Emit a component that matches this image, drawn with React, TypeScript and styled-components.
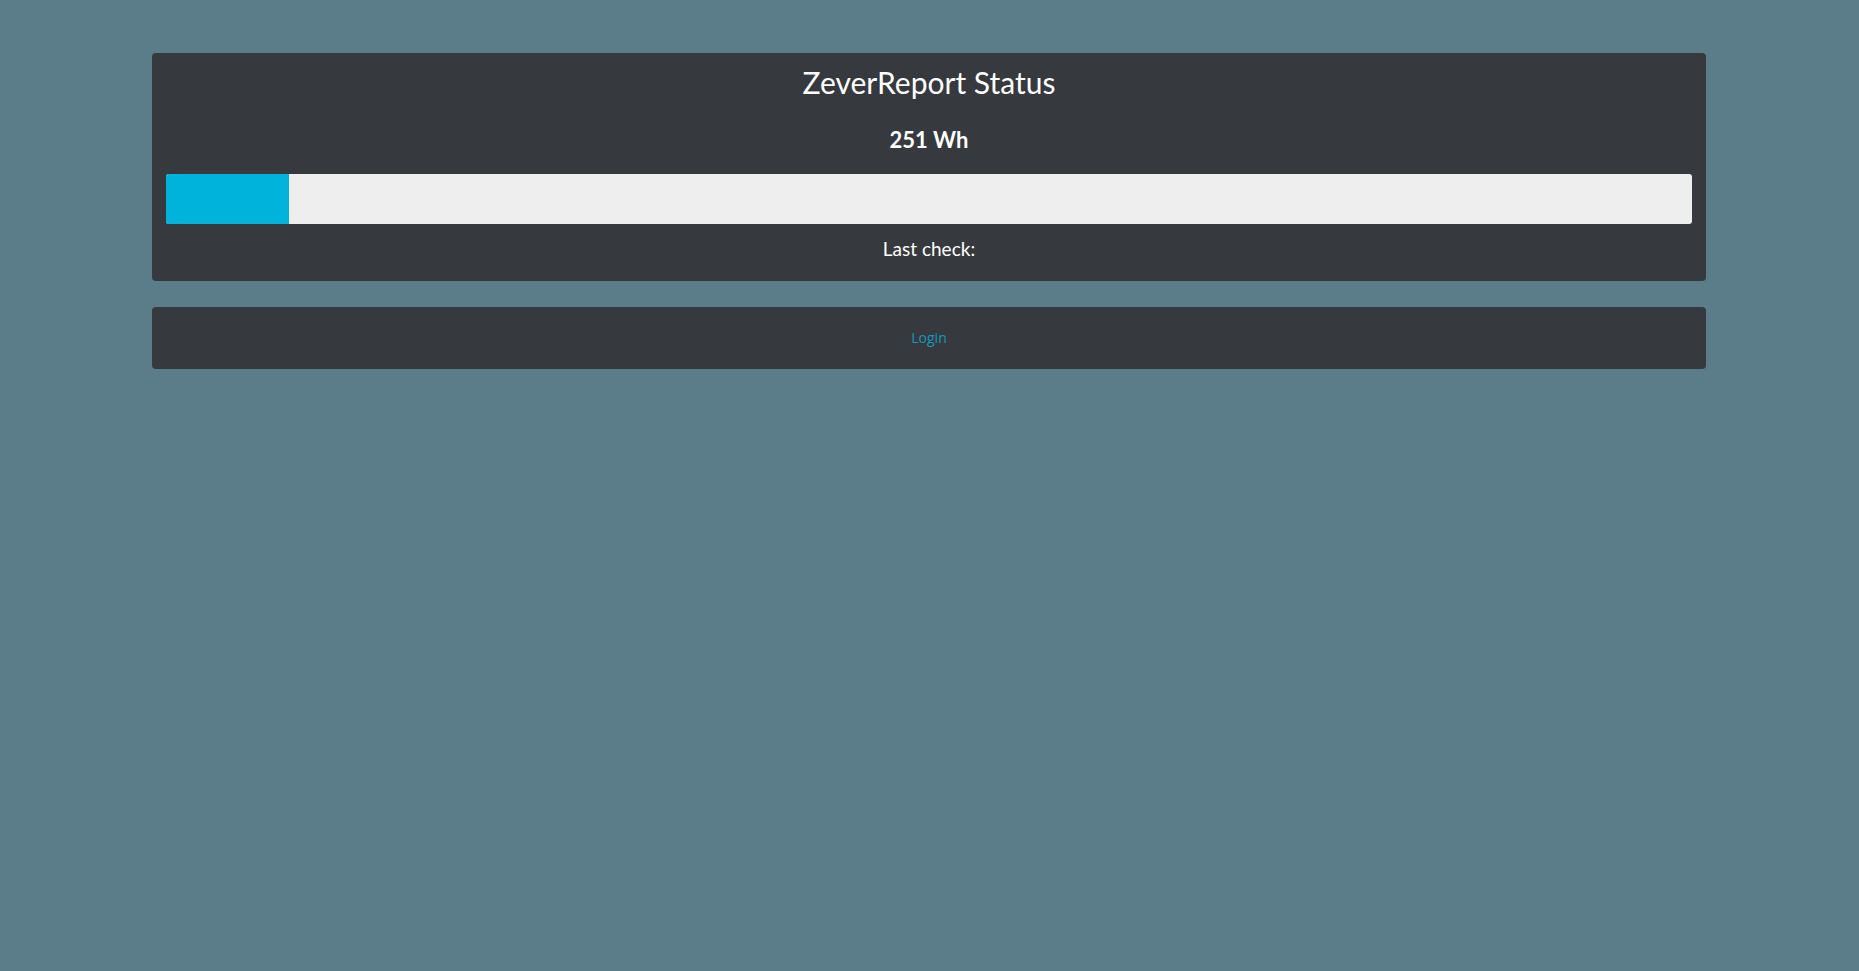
import React from "react";
import styled, { createGlobalStyle } from "styled-components";

const Global = createGlobalStyle`
  html, body { margin: 0; padding: 0; }
  body {
    background: #5a7d89;
    min-height: 971px;
    font-family: Lato, "Open Sans", sans-serif;
    color: #ffffff;
  }
`;

const Page = styled.div`
  padding: 53px 153px 0 152px;
  display: flex;
  flex-direction: column;
  gap: 26px;
`;

const Card = styled.section<{ $pad: string }>`
  background: #363a3e;
  border-radius: 4px;
  padding: ${(p) => p.$pad};
  display: flex;
  flex-direction: column;
  align-items: stretch;
  text-align: center;
`;

const Title = styled.h1`
  margin: 11px 0 0;
  font-size: 30px;
  line-height: 36px;
  font-weight: 400;
`;

const Value = styled.h2`
  margin: 27px 0 0;
  font-size: 22px;
  line-height: 26px;
  font-weight: 700;
`;

const Track = styled.div`
  margin-top: 21px;
  height: 50px;
  background: #eeeeee;
  border-radius: 3px;
  overflow: hidden;
  display: flex;
`;

const Fill = styled.div`
  background: #00b3db;
  height: 100%;
`;

const Checked = styled.p`
  margin: 13px 0 0;
  font-size: 19px;
  line-height: 24px;
`;

const LoginLink = styled.a`
  font-family: "Open Sans", sans-serif;
  font-size: 14px;
  line-height: 62px;
  color: #1897b9;
  text-decoration: none;
`;

export default function App() {
  const pct = 123 / 1526;
  return (
    <>
      <Global />
      <Page>
        <Card $pad="0 14px 20px">
          <Title>ZeverReport Status</Title>
          <Value>251 Wh</Value>
          <Track>
            <Fill style={{ width: `${pct * 100}%` }} />
          </Track>
          <Checked>Last check:</Checked>
        </Card>
        <Card $pad="0">
          <LoginLink href="#">Login</LoginLink>
        </Card>
      </Page>
    </>
  );
}
